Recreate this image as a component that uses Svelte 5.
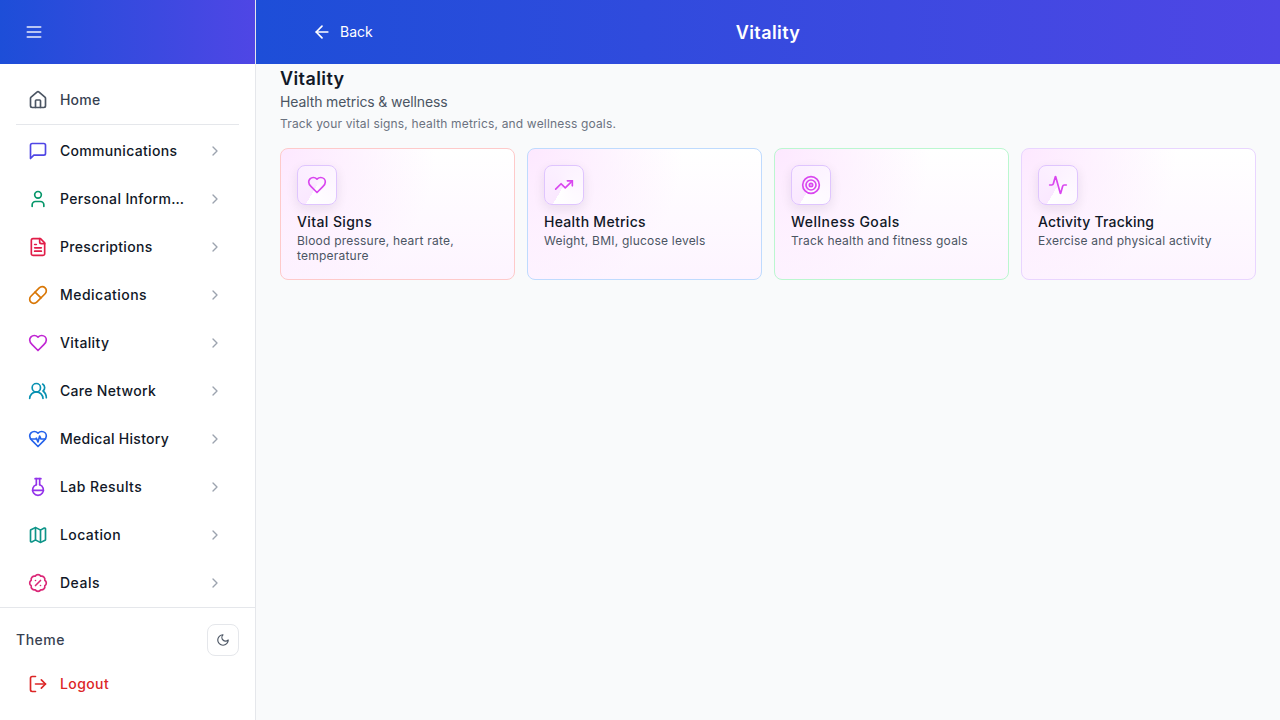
<script>
  const heart = ['M19 14c1.49-1.46 3-3.21 3-5.5A5.5 5.5 0 0 0 16.5 3c-1.76 0-3 .5-4.5 2-1.5-1.5-2.74-2-4.5-2A5.5 5.5 0 0 0 2 8.5c0 2.3 1.5 4.05 3 5.5l7 7Z'];
  const icons = {
    menu: ['M4 12h16', 'M4 6h16', 'M4 18h16'],
    back: ['m12 19-7-7 7-7', 'M19 12H5'],
    home: ['M15 21v-8a1 1 0 0 0-1-1h-4a1 1 0 0 0-1 1v8', 'M3 10a2 2 0 0 1 .709-1.528l7-5.999a2 2 0 0 1 2.582 0l7 5.999A2 2 0 0 1 21 10v9a2 2 0 0 1-2 2H5a2 2 0 0 1-2-2z'],
    message: ['M21 15a2 2 0 0 1-2 2H7l-4 4V5a2 2 0 0 1 2-2h14a2 2 0 0 1 2 2z'],
    user: ['M19 21v-2a4 4 0 0 0-4-4H9a4 4 0 0 0-4 4v2', 'M8 7a4 4 0 1 0 8 0a4 4 0 1 0-8 0'],
    file: ['M15 2H6a2 2 0 0 0-2 2v16a2 2 0 0 0 2 2h12a2 2 0 0 0 2-2V7Z', 'M14 2v4a2 2 0 0 0 2 2h4', 'M10 9H8', 'M16 13H8', 'M16 17H8'],
    pill: ['m10.5 20.5 10-10a4.95 4.95 0 1 0-7-7l-10 10a4.95 4.95 0 1 0 7 7Z', 'm8.5 8.5 7 7'],
    heart,
    users: ['M18 21a8 8 0 0 0-16 0', 'M5 8a5 5 0 1 0 10 0a5 5 0 1 0-10 0', 'M22 20c0-3.37-2-6.5-4-8a5 5 0 0 0-.45-8.3'],
    pulse: [...heart, 'M3.22 12H9.5l.5-1 2 4.5 2-7 1.5 3.5h5.27'],
    flask: ['M10 2v7.31', 'M14 9.3V1.99', 'M8.5 2h7', 'M14 9.3a6.5 6.5 0 1 1-4 0', 'M5.52 16h12.96'],
    map: ['M14.106 5.553a2 2 0 0 0 1.788 0l3.659-1.83A1 1 0 0 1 21 4.619v12.764a1 1 0 0 1-.553.894l-4.553 2.277a2 2 0 0 1-1.788 0l-4.212-2.106a2 2 0 0 0-1.788 0l-3.659 1.83A1 1 0 0 1 3 19.381V6.618a1 1 0 0 1 .553-.894l4.553-2.277a2 2 0 0 1 1.788 0z', 'M15 5.764v15', 'M9 3.236v15'],
    percent: ['M3.85 8.62a4 4 0 0 1 4.78-4.77 4 4 0 0 1 6.74 0 4 4 0 0 1 4.78 4.78 4 4 0 0 1 0 6.74 4 4 0 0 1-4.77 4.78 4 4 0 0 1-6.75 0 4 4 0 0 1-4.78-4.77 4 4 0 0 1 0-6.76Z', 'm15 9-6 6', 'M9 9h.01', 'M15 15h.01'],
    chevron: ['m9 18 6-6-6-6'],
    moon: ['M12 3a6 6 0 0 0 9 9 9 9 0 1 1-9-9Z'],
    logout: ['M9 21H5a2 2 0 0 1-2-2V5a2 2 0 0 1 2-2h4', 'm16 17 5-5-5-5', 'M21 12H9'],
    trend: ['m22 7-8.5 8.5-5-5L2 17', 'M16 7h6v6'],
    target: ['M2 12a10 10 0 1 0 20 0a10 10 0 1 0-20 0', 'M6 12a6 6 0 1 0 12 0a6 6 0 1 0-12 0', 'M10 12a2 2 0 1 0 4 0a2 2 0 1 0-4 0'],
    activity: ['M22 12h-2.48a2 2 0 0 0-1.93 1.46l-2.35 8.36a.25.25 0 0 1-.48 0L9.24 2.18a.25.25 0 0 0-.48 0l-2.35 8.36A2 2 0 0 1 4.49 12H2'],
  };

  // `track` is the letter spacing of each label, in pixels.
  const nav = [
    { label: 'Communications', icon: 'message', color: '#4f46e5', track: 0.32 },
    { label: 'Personal Information', icon: 'user', color: '#059669', track: 0.36 },
    { label: 'Prescriptions', icon: 'file', color: '#e11d48', track: 0.31 },
    { label: 'Medications', icon: 'pill', color: '#d97706', track: 0.45 },
    { label: 'Vitality', icon: 'heart', color: '#c026d3', track: 0.37 },
    { label: 'Care Network', icon: 'users', color: '#0891b2', track: 0.31 },
    { label: 'Medical History', icon: 'pulse', color: '#2563eb', track: 0.28 },
    { label: 'Lab Results', icon: 'flask', color: '#9333ea', track: 0.45 },
    { label: 'Location', icon: 'map', color: '#0d9488', track: 0.42 },
    { label: 'Deals', icon: 'percent', color: '#db2777', track: 0.5 },
  ];

  const cards = [
    { title: 'Vital Signs', text: 'Blood pressure, heart rate, temperature', icon: 'heart', border: '#fecaca', track: 0.4 },
    { title: 'Health Metrics', text: 'Weight, BMI, glucose levels', icon: 'trend', border: '#bfdbfe', track: 0.28 },
    { title: 'Wellness Goals', text: 'Track health and fitness goals', icon: 'target', border: '#bbf7d0', track: 0.48 },
    { title: 'Activity Tracking', text: 'Exercise and physical activity', icon: 'activity', border: '#e9d5ff', track: 0.2 },
  ];
</script>

{#snippet icon(name, size = 20)}
  <svg width={size} height={size} viewBox="0 0 24 24" fill="none" stroke="currentColor" stroke-width="2" stroke-linecap="round" stroke-linejoin="round" aria-hidden="true">
    {#each icons[name] as d}<path {d} />{/each}
  </svg>
{/snippet}

<div class="app">
  <aside>
    <div class="brand"><button class="menu" aria-label="Menu">{@render icon('menu')}</button></div>
    <nav>
      <a class="row home" href="#home">{@render icon('home')}<span class="label">Home</span></a>
      <div class="items">
        {#each nav as item}
          <a class="row" href="#item">
            <span class="glyph" style="color: {item.color}">{@render icon(item.icon)}</span>
            <span class="label" style="letter-spacing: {item.track}px">{item.label}</span>
            <span class="chevron">{@render icon('chevron', 16)}</span>
          </a>
        {/each}
      </div>
    </nav>
    <footer>
      <div class="theme"><span>Theme</span><button aria-label="Dark theme">{@render icon('moon', 14)}</button></div>
      <button class="row logout">{@render icon('logout')}<span>Logout</span></button>
    </footer>
  </aside>

  <main>
    <header>
      <button class="back">{@render icon('back')}<span>Back</span></button>
      <h1>Vitality</h1>
    </header>
    <section>
      <h2>Vitality</h2>
      <p class="subtitle">Health metrics &amp; wellness</p>
      <p class="intro">Track your vital signs, health metrics, and wellness goals.</p>
      <div class="cards">
        {#each cards as card}
          <article style="border-color: {card.border}">
            <div class="tile">{@render icon(card.icon)}</div>
            <h3 style="letter-spacing: {card.track}px">{card.title}</h3>
            <p>{card.text}</p>
          </article>
        {/each}
      </div>
    </section>
  </main>
</div>

<style>
  :global(body) { margin: 0; overflow: hidden; }
  * { box-sizing: border-box; }
  svg { display: block; flex: none; }
  h1, h2, h3, p { margin: 0; }
  a { text-decoration: none; }
  button { font: inherit; letter-spacing: inherit; border: 0; padding: 0; background: none; color: inherit; }

  .app { display: flex; width: 100%; height: 100vh; background: #f9fafb; font-family: Inter, sans-serif; font-size: 14px; line-height: 20px; color: #111827; }
  aside { width: 256px; flex: none; display: flex; flex-direction: column; background: #fff; border-right: 1px solid #e5e7eb; }
  .brand { height: 64px; flex: none; display: flex; align-items: center; padding: 0 24px; background: linear-gradient(90deg, #1d4ed8, #4f46e5); }
  .menu { color: rgba(255, 255, 255, 0.9); }

  nav { flex: 1; min-height: 0; overflow: hidden; padding: 16px 16px 0; }
  .row { display: flex; align-items: center; gap: 12px; height: 44px; padding: 0 12px; font-weight: 500; color: #111827; }
  .home { height: 40px; color: #4b5563; }
  .home .label { color: #374151; letter-spacing: 0.2px; }
  .items { margin-top: 4px; padding-top: 4px; border-top: 1px solid #e5e7eb; display: flex; flex-direction: column; gap: 4px; }
  .items .row { padding-right: 16px; }
  .label { flex: 1; min-width: 0; overflow: hidden; white-space: nowrap; text-overflow: ellipsis; }
  .chevron { color: #9ca3af; margin-left: 8px; }

  footer { height: 113px; flex: none; padding: 16px; border-top: 1px solid #e5e7eb; }
  .theme { display: flex; align-items: center; justify-content: space-between; font-weight: 500; letter-spacing: 0.5px; color: #374151; }
  .theme button { width: 32px; height: 32px; display: grid; place-items: center; border: 1px solid #e5e7eb; border-radius: 8px; color: #4b5563; }
  .logout { width: 100%; height: 40px; margin-top: 8px; letter-spacing: 0.4px; color: #dc2626; }

  main { flex: 1; min-width: 0; }
  header { height: 64px; display: grid; grid-template-columns: 1fr auto 1fr; align-items: center; padding: 0 56px; background: linear-gradient(90deg, #1d4ed8, #4f46e5); color: #fff; }
  .back { display: flex; align-items: center; gap: 8px; }
  h1, h2 { font-size: 18px; line-height: 27px; padding-top: 1px; font-weight: 600; letter-spacing: 0.4px; }
  section { padding: 0 24px; }
  .subtitle { color: #4b5563; letter-spacing: -0.12px; }
  .intro { margin-top: 4px; margin-bottom: 16px; font-size: 12px; line-height: 16px; letter-spacing: 0.17px; color: #6b7280; }
  .cards { display: grid; grid-template-columns: repeat(4, 1fr); gap: 12px; }
  article { height: 132px; padding: 16px; border: 1px solid; border-radius: 8px; background: radial-gradient(circle at 0 0, #fde8ff, transparent 58%), linear-gradient(180deg, #fff, #fdf4ff); }
  .tile { width: 40px; height: 40px; display: grid; place-items: center; border: 1px solid #dfc5fe; border-radius: 8px; color: #d946ef; background: conic-gradient(from 210deg, #fae8ff, #fff); box-shadow: 0 4px 12px rgba(17, 24, 39, 0.09); }
  h3 { margin-top: 8px; font-size: 14px; line-height: 18px; font-weight: 500; }
  article p { margin-top: 2px; font-size: 12px; line-height: 15px; letter-spacing: 0.22px; color: #4b5563; }
</style>
